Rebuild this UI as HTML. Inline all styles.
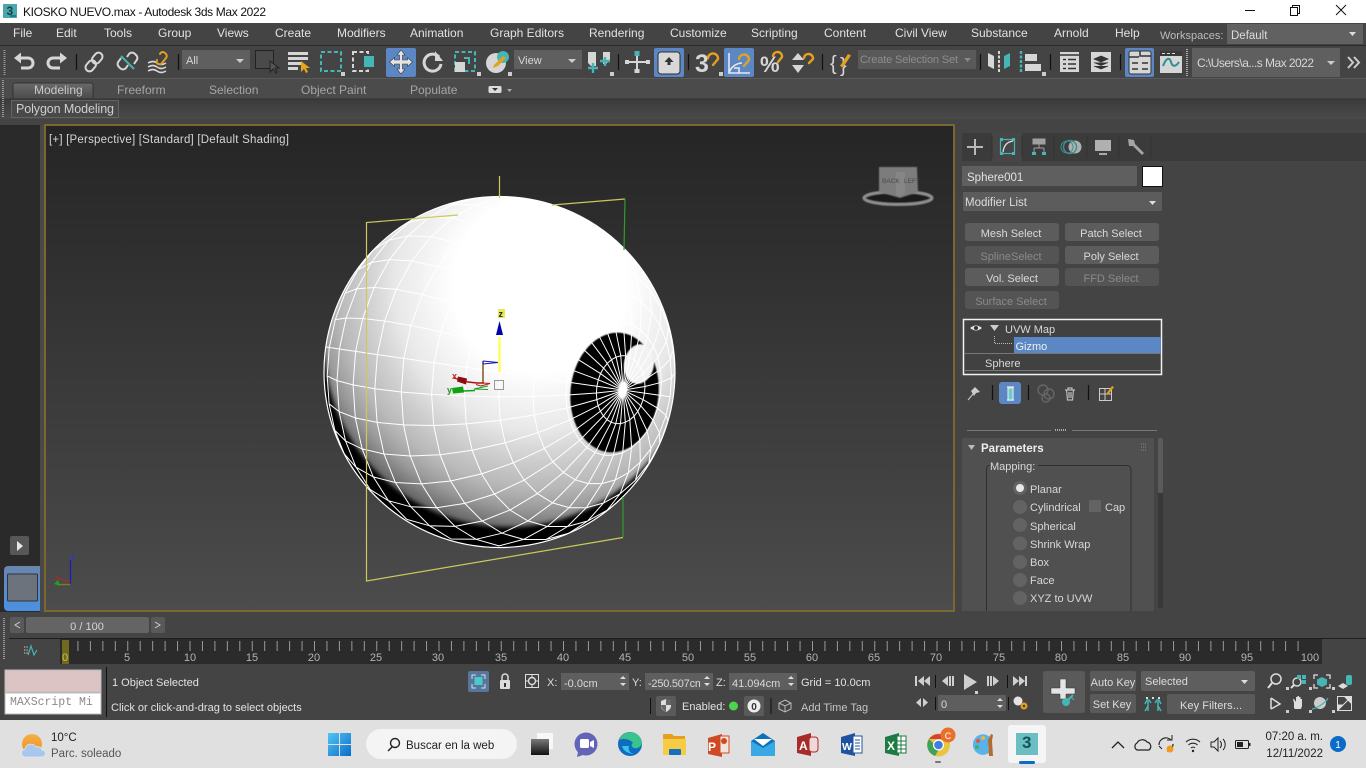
<!DOCTYPE html>
<html><head><meta charset="utf-8"><title>KIOSKO NUEVO.max - Autodesk 3ds Max 2022</title>
<style>
html,body{margin:0;padding:0;background:#444;width:1366px;height:768px;overflow:hidden}
svg{display:block;position:absolute;left:0;top:0}
text{font-family:"Liberation Sans",sans-serif;font-size:12px;fill:#dcdcdc}
.m{font-size:12px;fill:#e2e2e2}
.r{font-size:12px;fill:#a6a6a6}
.b{text-anchor:middle;font-size:11px;fill:#dadada}
.d{text-anchor:middle;font-size:11px;fill:#8a8a8a}
.p{font-size:11px;fill:#d8d8d8}
.t{text-anchor:middle;font-size:11px;fill:#b4b4b4}
.ic{fill:none;stroke:#d6d6d6;stroke-width:2}
.or{fill:none;stroke:#e3a11f;stroke-width:2.4;stroke-linecap:round}
.f{fill:#d6d6d6}
</style></head><body>
<svg xmlns="http://www.w3.org/2000/svg" width="1366" height="768" viewBox="0 0 1366 768">
<defs>
<linearGradient id="vp" x1="0" y1="0" x2="0" y2="1"><stop offset="0" stop-color="#252525"/><stop offset="1" stop-color="#4c4c4c"/></linearGradient>
<linearGradient id="tab" x1="0" y1="0" x2="0" y2="1"><stop offset="0" stop-color="#6a6a6a"/><stop offset="1" stop-color="#4a4a4a"/></linearGradient>
<linearGradient id="rb" x1="0" y1="0" x2="0" y2="1"><stop offset="0" stop-color="#3b3b3b"/><stop offset="1" stop-color="#4a4a4a"/></linearGradient>
<linearGradient id="vb" x1="0" y1="0" x2="0" y2="1"><stop offset="0" stop-color="#6a85ad"/><stop offset="1" stop-color="#4a90e2"/></linearGradient>
<radialGradient id="sp" gradientUnits="userSpaceOnUse" cx="540" cy="285" r="290">
<stop offset="0" stop-color="#fff"/><stop offset=".3" stop-color="#fff"/><stop offset=".5" stop-color="#e8e8e8"/><stop offset=".6" stop-color="#cfcfcf"/><stop offset=".7" stop-color="#b8b8b8"/><stop offset=".77" stop-color="#9c9c9c"/><stop offset=".82" stop-color="#7c7c7c"/><stop offset=".88" stop-color="#555"/></radialGradient>
<linearGradient id="win" x1="0" y1="0" x2="1" y2="1"><stop offset="0" stop-color="#52c6f5"/><stop offset="1" stop-color="#0a6cc8"/></linearGradient>
<linearGradient id="tv" x1="0" y1="0" x2="0" y2="1"><stop offset="0" stop-color="#7a7a7a"/><stop offset="1" stop-color="#111"/></linearGradient>
<linearGradient id="sun" x1="0" y1="0" x2="0" y2="1"><stop offset="0" stop-color="#f4b04a"/><stop offset="1" stop-color="#ee8f1e"/></linearGradient>
<clipPath id="sc"><circle cx="499.5" cy="372" r="175.5"/></clipPath>
<filter id="bl1" x="-10%" y="-10%" width="120%" height="120%"><feGaussianBlur stdDeviation="2"/></filter>
<filter id="bl2" x="-50%" y="-50%" width="200%" height="200%"><feGaussianBlur stdDeviation="3"/></filter>
<filter id="bl3" x="-20%" y="-20%" width="140%" height="140%"><feGaussianBlur stdDeviation=".6"/></filter>
</defs>

<!-- title bar -->
<rect width="1366" height="23" fill="#fff"/>
<rect x="3" y="4" width="14" height="14" fill="#4aa7ab"/><text x="6.5" y="15" style="font-size:12px;font-weight:bold;fill:#12414a">3</text><rect x="10" y="15" width="6" height="2" fill="#1d7f86"/>
<text x="23" y="16" style="font-size:12px;fill:#111" textLength="243">KIOSKO NUEVO.max - Autodesk 3ds Max 2022</text>
<path d="M1245 10.5h10" stroke="#111" stroke-width="1"/>
<path d="M1290.5 7.5h7v8h-7zM1292.5 7.5v-2h7v8h-2" fill="none" stroke="#111"/>
<path d="M1336 5l10 10M1346 5l-10 10" stroke="#111" stroke-width="1"/>

<!-- menu bar -->
<rect y="23" width="1366" height="22" fill="#444"/>
<rect y="45" width="1366" height="1" fill="#2a2a2a"/>
<g>
<text class="m" x="13" y="37">File</text><text class="m" x="56" y="37">Edit</text><text class="m" x="104" y="37">Tools</text><text class="m" x="158" y="37">Group</text><text class="m" x="217" y="37">Views</text><text class="m" x="275" y="37">Create</text><text class="m" x="337" y="37">Modifiers</text><text class="m" x="410" y="37">Animation</text><text class="m" x="490" y="37">Graph Editors</text><text class="m" x="589" y="37">Rendering</text><text class="m" x="670" y="37">Customize</text><text class="m" x="751" y="37">Scripting</text><text class="m" x="824" y="37">Content</text><text class="m" x="895" y="37">Civil View</text><text class="m" x="971" y="37">Substance</text><text class="m" x="1054" y="37">Arnold</text><text class="m" x="1115" y="37">Help</text>
</g>
<text x="1160" y="39" style="font-size:11px;fill:#bdbdbd">Workspaces:</text>
<rect x="1227" y="24" width="136" height="20" fill="#616161"/><text x="1231" y="39" style="font-size:11.5px;fill:#dcdcdc">Default</text><path d="M1349 32h7l-3.500 4z" fill="#ddd"/>

<!-- toolbar -->
<rect y="46" width="1366" height="32" fill="#444"/>
<rect y="78" width="1366" height="1" fill="#5a5a5a"/>
<path d="M4.500 50v26" stroke="#999" stroke-dasharray="1 1" stroke-width="2"/>
<!-- undo/redo -->
<g><path d="M18 58h10a5 5 0 0 1 5 5v0a5 5 0 0 1-5 5h-7" class="ic" style="stroke-width:3"/><path d="M14 58l7-5.500v11z" class="f"/></g>
<g transform="translate(81,0) scale(-1,1)"><path d="M18 58h10a5 5 0 0 1 5 5v0a5 5 0 0 1-5 5h-7" class="ic" style="stroke-width:3"/><path d="M14 58l7-5.500v11z" class="f"/></g>
<path d="M76.500 54v16M178.500 54v16" stroke="#111" stroke-width="1.200"/>
<!-- link -->
<g fill="none" stroke="#d6d6d6" stroke-width="2"><rect x="-4" y="-11" width="8" height="12" rx="4" transform="translate(94,62) rotate(40)"/><rect x="-4" y="-1" width="8" height="12" rx="4" transform="translate(94,62) rotate(40)"/></g>
<g fill="none" stroke="#d6d6d6" stroke-width="2"><path d="M121 58l-2 3a4 4 0 0 0 0 6l1 1a4 4 0 0 0 6 0l2-3M127 57l2-3a4 4 0 0 1 6 0l1 1a4 4 0 0 1 0 6l-2 3"/></g>
<path d="M121 56l13 13" stroke="#45b5b5" stroke-width="2"/>
<!-- bind -->
<path d="M148 63q5-3 9 0t9 0M148 67q5-3 9 0t9 0M148 71q5-3 9 0t9 0" class="ic" style="stroke-width:1.600"/>
<path d="M160 54a3 3 0 0 1 5 -1l1 1a3 3 0 0 1 0 4l-4 5a3 3 0 0 1-5 0a3 3 0 0 1 0-3" class="or" style="stroke-width:2"/>
<!-- All dropdown -->
<rect x="182" y="50" width="68" height="19" fill="#5f5f5f"/><text x="186" y="64" style="font-size:11px;fill:#d6d6d6">All</text><path d="M236 59h8l-4 4z" fill="#ccc"/>
<!-- select object -->
<rect x="255.500" y="50.500" width="18" height="18" fill="#4a4a4a" stroke="#222"/><path d="M270 61l0 11 3-3 3 4 1-1-2-4 4 0z" fill="#555" stroke="#222"/>
<!-- name select -->
<path d="M288 52h20v3h-20zM288 57h20v3h-20zM288 62h14v3h-14zM288 67h10v3h-10z" class="f"/><path d="M301 61l0 11 3-3 2 4 2-1-2-4 4 0z" fill="#e9a41e"/>
<!-- rect select -->
<rect x="321" y="52" width="20" height="19" fill="none" stroke="#45b5b5" stroke-width="2" stroke-dasharray="4 2.500"/><path d="M341 76v-4h4v4z" fill="#ccc"/>
<rect x="353" y="52" width="15" height="19" fill="none" stroke="#d6d6d6" stroke-width="2" stroke-dasharray="4 2.500"/><rect x="364" y="56" width="10" height="11" fill="#45b5b5"/>
<!-- move -->
<rect x="386" y="48" width="30" height="29" rx="2" fill="#5b88c4"/>
<path d="M401 50l4 5h-2.500v5h5v-2.500l5 4.500-5 4.500v-2.500h-5v5h2.500l-4 5-4-5h2.500v-5h-5v2.500l-5-4.500 5-4.500v2.500h5v-5h-2.500z" fill="#e4e4e4" stroke="#333" stroke-width=".6"/>
<!-- rotate -->
<path d="M439 57a8.500 8.500 0 1 0 2 7" class="ic" style="stroke-width:3"/><path d="M435 51v10h8z" class="f"/>
<!-- scale -->
<rect x="455" y="52" width="20" height="19" fill="none" stroke="#45b5b5" stroke-width="2" stroke-dasharray="4 2.500"/><path d="M464 58h5v6" fill="none" stroke="#45b5b5" stroke-width="2"/><rect x="455" y="62" width="10" height="10" class="f"/><path d="M477 76v-4h4v4z" fill="#ccc"/>
<!-- placement -->
<circle cx="496" cy="63" r="10" fill="#d6d6d6"/><circle cx="503" cy="57" r="6" fill="#45b5b5"/><path d="M494 65l9-9 3 2-8 8-5 2z" fill="#e3a11f"/><path d="M508 76v-4h4v4z" fill="#ccc"/>
<!-- View dropdown -->
<rect x="514" y="50" width="68" height="19" fill="#5f5f5f"/><text x="518" y="64" style="font-size:11px;fill:#d6d6d6">View</text><path d="M568 59h8l-4 4z" fill="#ccc"/>
<!-- pivot -->
<path d="M588 52h8v14h-5l-3-3zM600 52h10v8l-4 4h-3v-12z" class="f"/><path d="M593 63v10M588 68h10M605 57v9M600 61h10" stroke="#45b5b5" stroke-width="2.400"/><path d="M610 76v-4h4v4z" fill="#ccc"/>
<path d="M618.500 54v16M688.500 54v16M822.500 54v16M980.500 54v16M1050.500 54v16M1120.500 54v16" stroke="#111" stroke-width="1.200"/>
<!-- axis constraint -->
<path d="M637 54v18M626 62h22" stroke="#d6d6d6" stroke-width="2"/><rect x="634.500" y="51" width="5" height="5" fill="#45b5b5"/><rect x="634.500" y="69" width="5" height="4" class="f"/><rect x="646" y="60" width="4" height="4" class="f"/><rect x="625" y="60" width="4" height="4" class="f"/>
<!-- manipulate btn -->
<rect x="654" y="48" width="30" height="29" rx="2" fill="#5b88c4"/><rect x="658" y="52" width="22" height="22" rx="3" fill="#d8d8d8" stroke="#2d2d2d"/><path d="M669 57l4.500 5h-3v3h-3v-3h-3z" fill="#333"/>
<!-- 3 snap -->
<text x="695" y="72" style="font-size:25px;font-weight:bold;fill:#d6d6d6">3</text><path d="M708 58a5 5 0 1 1 10 1l-5 6" class="or"/><path d="M719 76v-4h4v4z" fill="#ccc"/>
<!-- angle snap -->
<rect x="724" y="48" width="30" height="29" rx="2" fill="#5b88c4"/><path d="M729 53v20h21M729 73a14 14 0 0 1 13 -10M734 68h5v5" fill="none" stroke="#e8e8e8" stroke-width="1.600"/><path d="M739 59a5 5 0 1 1 10 1l-5 6" class="or"/>
<!-- percent -->
<text x="760" y="72" style="font-size:22px;font-weight:bold;fill:#d6d6d6">%</text><path d="M773 56a4 4 0 1 1 9 1l-4 5" class="or"/>
<!-- spinner -->
<path d="M792 60l6-7 6 7zM792 65h12l-6 8z" class="f"/><path d="M804 58a4 4 0 1 1 9 1l-4 4" class="or"/>
<!-- {} -->
<text x="830" y="70" style="font-size:20px;fill:#d6d6d6">{</text><text x="840" y="72" style="font-size:20px;fill:#d6d6d6">}</text><path d="M840 66l8-12 3 1.500-8 12z" fill="#e3a11f"/>
<!-- create set -->
<rect x="858" y="50" width="118" height="19" fill="#595959"/><text x="860" y="63" style="font-size:11px;fill:#8d8d8d" textLength="98">Create Selection Set</text><path d="M964 58h7l-3.500 4z" fill="#888"/>
<!-- mirror -->
<path d="M988 53l6 3v13l-6-3z" class="f"/><path d="M999 51v22" stroke="#d6d6d6" stroke-width="2" stroke-dasharray="3 1.500"/><path d="M1010 53l-6 3v13l6-3z" fill="#45b5b5"/>
<!-- align -->
<path d="M1021 51v21" stroke="#45b5b5" stroke-width="2.400" stroke-dasharray="3 1.500"/><rect x="1025" y="54" width="12" height="7" class="f"/><rect x="1025" y="64" width="16" height="7" class="f"/><path d="M1042 76v-4h4v4z" fill="#ccc"/>
<!-- layers -->
<rect x="1060" y="52" width="19" height="20" fill="#d6d6d6"/><path d="M1060 55h19M1063 59.500h3M1068 59.500h8M1063 64h3M1068 64h8M1063 68.500h3M1068 68.500h8" stroke="#333" stroke-width="1.600"/>
<rect x="1091" y="52" width="20" height="20" fill="#d6d6d6"/><path d="M1101 56l7 3-7 3-7-3zM1094 62.500l7 3 7-3M1094 66l7 3 7-3" fill="#333" stroke="#333" stroke-width=".8"/>
<!-- graph btn -->
<rect x="1125" y="48" width="29" height="29" rx="2" fill="#5b88c4"/><rect x="1129" y="51" width="22" height="23" rx="2" fill="#d6d6d6" stroke="#333"/><path d="M1132 63h6M1142 63h6M1132 69h6M1142 69h6M1140 51v5h11M1129 57h10" stroke="#333" stroke-width="1.500" fill="none"/>
<rect x="1160" y="51" width="22" height="22" fill="#d6d6d6"/><rect x="1160" y="51" width="22" height="5" fill="#3a3a3a"/><path d="M1162 53.500h3M1167 53.500h3M1172 53.500h3" stroke="#ddd"/><path d="M1163 66c4-10 7-8 8-4s4 6 8 0" fill="none" stroke="#2a8f91" stroke-width="2"/>
<path d="M1187 49v27" stroke="#aaa" stroke-dasharray="1 1" stroke-width="2"/>
<rect x="1192" y="48" width="148" height="29" fill="#5f5f5f"/><text x="1197" y="67" style="font-size:12px;fill:#d6d6d6" textLength="117">C:\Users\a...s Max 2022</text><path d="M1327 61h8l-4 4z" fill="#ccc"/>
<path d="M1348 57l5 5.500-5 5.500M1354 57l5 5.500-5 5.500" fill="none" stroke="#ccc" stroke-width="2"/>

<!-- ribbon -->
<rect y="79" width="1366" height="20" fill="#4b4b4b"/>
<rect y="99" width="1366" height="20" fill="url(#rb)"/>
<rect y="98.500" width="1366" height="1" fill="#333"/>
<path d="M13 99v-14a2 2 0 0 1 2-2h76a2 2 0 0 1 2 2v14z" fill="url(#tab)" stroke="#333"/>
<text class="r" x="34" y="94" style="fill:#c8c8c8">Modeling</text><text class="r" x="117" y="94">Freeform</text><text class="r" x="209" y="94">Selection</text><text class="r" x="301" y="94">Object Paint</text><text class="r" x="410" y="94">Populate</text>
<rect x="488.500" y="86" width="13" height="7" rx="1.500" fill="#ddd"/><path d="M492 88h6l-3 3z" fill="#333"/><path d="M507 89h5l-2.500 3z" fill="#aaa"/>
<rect x="11.500" y="100.500" width="107" height="17" fill="#494949" stroke="#636363"/><text x="16" y="113" style="font-size:12.500px;fill:#cfcfcf" textLength="98">Polygon Modeling</text>
<path d="M3 80v38" stroke="#999" stroke-dasharray="1 1" stroke-width="2"/>
<rect y="119" width="1366" height="6" fill="#444"/>
<path d="M0 127.500h40M962 127.500h404" stroke="#8b8b8b" stroke-dasharray="1 1" stroke-width="2"/>

<!-- left strip -->
<rect y="125" width="40" height="487" fill="#2a2a2a"/>
<rect x="40" y="125" width="4" height="487" fill="#484848"/>
<rect x="10" y="536" width="19" height="19" rx="2" fill="#575757"/><path d="M17 541l6 5-6 5z" fill="#e8e8e8"/>
<path d="M4 570a4 4 0 0 1 4-4h32v45H8a4 4 0 0 1-4-4z" fill="url(#vb)"/><rect x="7.500" y="574" width="30" height="27" rx="1" fill="#6d737d" stroke="#30343b"/>

<!-- viewport -->
<rect x="45" y="125" width="909" height="486" fill="url(#vp)" stroke="#7a692e" stroke-width="2"/>
<text x="49" y="143" style="font-size:11.500px;fill:#d4d4d4" textLength="240">[+] [Perspective] [Standard] [Default Shading]</text>

<!-- viewcube -->
<ellipse cx="898" cy="198" rx="34" ry="6.500" fill="#1f1f1f" stroke="#8f8f8f" stroke-width="3" filter="url(#bl3)"/>
<path d="M879 167h38l1 25-18 6-21-6z" fill="#7c7c7c" filter="url(#bl3)"/><path d="M896 172h9v22l-5 3-4-2z" fill="#868686"/>
<text x="882" y="183" style="font-size:6.500px;fill:#4a4a4a">BACK</text><text x="904" y="183" style="font-size:6.500px;fill:#4a4a4a">LEFT</text>

<!-- sphere -->
<circle cx="499.500" cy="372" r="175.500" fill="#000"/>
<g clip-path="url(#sc)">
<circle cx="508" cy="343" r="184" fill="url(#sp)" filter="url(#bl1)"/>
<ellipse cx="614.500" cy="392.500" rx="44" ry="60" fill="#000" transform="rotate(6 614.500 392.500)" filter="url(#bl3)"/>
<ellipse cx="639" cy="364" rx="15" ry="20" fill="#f2f2f2" transform="rotate(10 639 364)" filter="url(#bl3)"/>
<ellipse cx="523" cy="332" rx="9" ry="8" fill="#fff" filter="url(#bl2)"/>
<g id="wire"></g>
</g>
<circle cx="499.500" cy="372" r="175.500" fill="none" stroke="#fff" stroke-width="1.200"/>

<!-- gizmo plane -->
<path d="M458 215L366.500 222.500V581L623 537.500M552 205L625 199" fill="none" stroke="#c9c95c" stroke-width="1.200"/>
<path d="M625 199L624 250M623 497V537" fill="none" stroke="#2c9d2c" stroke-width="1.200"/>
<path d="M499.500 176V198" stroke="#c9c95c" stroke-width="1.200"/>

<!-- transform gizmo -->
<path d="M499.500 337V372" stroke="#ffff55" stroke-width="2.400"/>
<path d="M499.500 321l3.500 14h-7z" fill="#0000b0"/>
<rect x="498" y="309" width="7" height="9" fill="#e8e85a"/><text x="498.500" y="317" style="font-size:9px;font-weight:bold;fill:#222">z</text>
<path d="M483 383V361" stroke="#7b4a10" stroke-width="1.400"/>
<path d="M483 361l15 1.500M483 364l15-1.500M483 361v3" stroke="#1515c0" fill="none"/>
<path d="M483 383l7 .5-9 2.500-5-1.500" stroke="#c01515" fill="none"/>
<path d="M488 386l-14 3 14 .5" stroke="#10a010" fill="none"/>
<path d="M454 378l14 4 9 1 7 0" stroke="#b01010" stroke-width="1.400" fill="none"/>
<path d="M458 376.500l9 2-1 6-9-3z" fill="#8e0c0c"/>
<path d="M452 388l11-1.500 1 6-11 1z" fill="#12a012"/><path d="M463 391l12-.5" stroke="#12a012" stroke-width="1.400"/>
<text x="452" y="379" style="font-size:9px;font-weight:bold;fill:#c02525">x</text>
<text x="447" y="393" style="font-size:9px;font-weight:bold;fill:#189a18">y</text>
<rect x="494.500" y="380.500" width="9" height="9" fill="none" stroke="#999"/>

<!-- mini axis -->
<path d="M70.500 560V585" stroke="#1a1ac0" stroke-width="1.200"/><text x="70" y="560" style="font-size:11px;fill:#3434c8">z</text>
<path d="M70.500 584.500H58" stroke="#7c7c20" stroke-width="1.400"/><path d="M70 582l-12-4" stroke="#a82a2a"/><path d="M54 584l4-4 2 6z" fill="#22a022"/><text x="55" y="580" style="font-size:8px;fill:#b02a2a">x</text>

<!-- command panel -->
<rect x="955" y="125" width="411" height="487" fill="#444"/>
<rect x="962" y="133" width="404" height="28" fill="#3b3b3b"/>
<rect x="992" y="133" width="30" height="28" fill="#464646"/>
<path d="M975 139v16M967 147h16" stroke="#b9b9b9" stroke-width="2"/>
<rect x="1000.500" y="139.500" width="14" height="14" fill="none" stroke="#45b5b5" stroke-width="1.200"/><path d="M1000 138h3v3h-3zM1012 138h3v3h-3zM1000 152h3v3h-3zM1012 152h3v3h-3z" fill="#45b5b5"/><path d="M1003 152c1-7 4-10 10-11" fill="none" stroke="#ddd" stroke-width="1.300"/>
<path d="M1033 139h12v5h-12zM1039 144v4M1034 148h10M1034 148v4M1044 148v4" fill="#a0a0a0" stroke="#a0a0a0"/><rect x="1032" y="152" width="4" height="3" fill="#45b5b5"/><rect x="1042" y="152" width="4" height="3" fill="#45b5b5"/>
<circle cx="1075" cy="147" r="6.500" fill="#b0b0b0"/><circle cx="1070" cy="147" r="6.500" fill="none" stroke="#3d8f8f" stroke-width="1.500"/><circle cx="1067" cy="147" r="6" fill="none" stroke="#3d8f8f"/>
<rect x="1095" y="140" width="16" height="11" fill="#b0b0b0"/><path d="M1099 154h8" stroke="#aaa" stroke-width="2"/>
<path d="M1128 139l6 1 1 4 9 9 -2 2-9-9-4 0z" fill="#a5a5a5"/>
<path d="M992 136v22M1022 136v22M1054 136v22M1087 136v22M1119 136v22M1151 136v22" stroke="#333"/>

<rect x="962" y="166" width="175" height="20" fill="#5f5f5f"/><text x="967" y="181" style="font-size:11.500px;fill:#e2e2e2">Sphere001</text>
<rect x="1142.500" y="166.500" width="20" height="20" fill="#fff" stroke="#111"/>
<rect x="963" y="192" width="199" height="19" fill="#5c5c5c"/><text x="965" y="206" style="font-size:11.500px;fill:#dcdcdc">Modifier List</text><path d="M1149 201h7l-3.500 4z" fill="#ddd"/>

<g fill="#5c5c5c"><rect x="965" y="223" width="94" height="18" rx="3"/><rect x="1065" y="223" width="94" height="18" rx="3"/><rect x="965" y="246" width="94" height="18" rx="3" fill="#545454"/><rect x="1065" y="246" width="94" height="18" rx="3"/><rect x="965" y="268" width="94" height="18" rx="3"/><rect x="1065" y="268" width="94" height="18" rx="3" fill="#545454"/><rect x="965" y="291" width="94" height="18" rx="3" fill="#545454"/></g>
<text class="b" x="1011" y="237">Mesh Select</text><text class="b" x="1111" y="237">Patch Select</text><text class="d" x="1011" y="260">SplineSelect</text><text class="b" x="1111" y="260">Poly Select</text><text class="b" x="1012" y="282">Vol. Select</text><text class="d" x="1111" y="282">FFD Select</text><text class="d" x="1011" y="305">Surface Select</text>

<rect x="963.500" y="319.500" width="198" height="55" fill="#414141" stroke="#f2f2f2" stroke-width="1.500"/>
<path d="M970 328q6-5 12 0q-6 5-12 0z" fill="#e0e0e0"/><circle cx="976" cy="328" r="2" fill="#333"/>
<path d="M990 325h9l-4.500 6z" fill="#ccc"/>
<text class="p" x="1005" y="333">UVW Map</text>
<path d="M994.500 336v7.500h18" stroke="#bbb" stroke-dasharray="1 1" fill="none"/>
<rect x="1014" y="337" width="147" height="16" fill="#5b88c4"/><text class="p" x="1015.500" y="350" style="fill:#eee">Gizmo</text>
<path d="M964 353.500h197M964 370.500h197" stroke="#777"/>
<text class="p" x="985" y="367">Sphere</text>

<path d="M968 400l5-6" stroke="#ccc"/><path d="M971 391l4-4 5 5-4 1-2 3z" fill="#ccc"/>
<path d="M992.500 385v15M1028.500 385v15M1088.500 385v15" stroke="#111" stroke-width="1.200"/>
<rect x="999" y="382" width="22" height="22" rx="3" fill="#5b88c4"/><path d="M1007 387h7M1007 400h7M1010.500 387v13" stroke="#d8d8d8" stroke-width="1.500"/><rect x="1008" y="388" width="5" height="12" fill="#6ccaca" stroke="#eee"/>
<circle cx="1043" cy="390" r="5" fill="none" stroke="#666" stroke-width="1.400"/><circle cx="1049" cy="394" r="5" fill="none" stroke="#666" stroke-width="1.400"/><circle cx="1046" cy="398" r="4" fill="none" stroke="#666" stroke-width="1.400"/>
<path d="M1065 390h10M1068 390v-2h4v2M1066.500 390l1 10h5l1-10M1069 392v6M1071 392v6" fill="none" stroke="#bbb" stroke-width="1.200"/>
<rect x="1099.500" y="388.500" width="12" height="12" fill="none" stroke="#ccc"/><path d="M1099 394h12M1105 388v12" stroke="#ccc"/><path d="M1106 394l6-8 2 1-6 8z" fill="#e3a11f"/>

<path d="M967 430.500h84M1072 430.500h85" stroke="#777"/><path d="M1055 430h12" stroke="#aaa" stroke-dasharray="1 1" stroke-width="2"/>
<rect x="962" y="438" width="192" height="173" fill="#505050"/>
<rect x="1158" y="438" width="5" height="170" rx="2" fill="#383838"/><rect x="1158" y="438" width="5" height="55" rx="2" fill="#5b5b5b"/>
<path d="M968 445h7l-3.500 5z" fill="#bbb"/>
<text x="981" y="452" style="font-size:11.500px;font-weight:bold;fill:#eee">Parameters</text>
<path d="M1141 444h5M1141 447h5M1141 450h5" stroke="#888" stroke-dasharray="1 1"/>
<path d="M986.500 611V470a4 4 0 0 1 3-5M1038 465.500h89a4 4 0 0 1 4 4V611" fill="none" stroke="#2f2f2f"/>
<text x="990" y="470" style="font-size:11px;fill:#d8d8d8">Mapping:</text>
<g fill="#636363"><circle cx="1020" cy="488" r="7"/><circle cx="1020" cy="507" r="7"/><circle cx="1020" cy="525" r="7"/><circle cx="1020" cy="543.500" r="7"/><circle cx="1020" cy="562" r="7"/><circle cx="1020" cy="580" r="7"/><circle cx="1020" cy="598" r="7"/></g>
<circle cx="1020" cy="488" r="4" fill="#e8e8e8"/>
<g><text class="p" x="1030" y="493">Planar</text><text class="p" x="1030" y="511">Cylindrical</text><text class="p" x="1030" y="530">Spherical</text><text class="p" x="1030" y="548">Shrink Wrap</text><text class="p" x="1030" y="566">Box</text><text class="p" x="1030" y="584">Face</text><text class="p" x="1030" y="602">XYZ to UVW</text><text class="p" x="1105" y="511">Cap</text></g>
<rect x="1089" y="500" width="12" height="12" fill="#636363"/>

<!-- bottom area -->
<rect y="612" width="1366" height="108" fill="#444"/>
<path d="M4 618v42" stroke="#999" stroke-dasharray="1 1" stroke-width="2"/>
<rect x="10" y="617" width="14" height="16" rx="2" fill="#595959"/><rect x="26" y="617" width="123" height="16" rx="2" fill="#646464"/><rect x="151" y="617" width="14" height="16" rx="2" fill="#595959"/>
<path d="M20 622l-5 3 5 3M155 622l5 3-5 3" fill="none" stroke="#ccc"/>
<text x="87" y="630" style="font-size:11px;fill:#d4d4d4;text-anchor:middle">0 / 100</text>
<rect x="9" y="638" width="1357" height="1" fill="#1e1e1e"/>
<rect x="60" y="639" width="1262" height="25" fill="#2b2b2b"/>
<path d="M24 647h4M24 650h4M24 653h4" stroke="#ccc" stroke-dasharray="1 .6"/><path d="M28 655l3-9 3 9 3-5" fill="none" stroke="#45b5b5" stroke-width="1.200"/>
<path d="M65 646H1310" stroke="#999" stroke-width="10" stroke-dasharray="1 11.450"/>
<rect x="62" y="640" width="7" height="24" fill="#6f6a20"/>
<g><text class="t" x="65" y="661" style="fill:#c8c840">0</text><text class="t" x="127" y="661">5</text><text class="t" x="190" y="661">10</text><text class="t" x="252" y="661">15</text><text class="t" x="314" y="661">20</text><text class="t" x="376" y="661">25</text><text class="t" x="438" y="661">30</text><text class="t" x="501" y="661">35</text><text class="t" x="563" y="661">40</text><text class="t" x="625" y="661">45</text><text class="t" x="688" y="661">50</text><text class="t" x="750" y="661">55</text><text class="t" x="812" y="661">60</text><text class="t" x="874" y="661">65</text><text class="t" x="936" y="661">70</text><text class="t" x="999" y="661">75</text><text class="t" x="1061" y="661">80</text><text class="t" x="1123" y="661">85</text><text class="t" x="1185" y="661">90</text><text class="t" x="1247" y="661">95</text><text class="t" x="1310" y="661">100</text></g>
<rect y="664" width="1366" height="56" fill="#444"/>

<rect x="5" y="670" width="96" height="22" fill="#dcc3c4" stroke="#bbb"/>
<rect x="5" y="693" width="96" height="21" fill="#fff" stroke="#bbb"/>
<text x="10" y="705" style="font-family:'Liberation Mono',monospace;font-size:11.500px;fill:#8a8a8a">MAXScript Mi</text><rect x="97" y="694" width="3" height="19" fill="#fff"/>
<path d="M106.500 667v50" stroke="#111"/>
<text x="112" y="686" style="font-size:11px;fill:#e2e2e2">1 Object Selected</text>
<text x="111" y="711" style="font-size:11px;fill:#e2e2e2">Click or click-and-drag to select objects</text>

<rect x="468" y="671" width="21" height="21" rx="2" fill="#56769d"/><path d="M472 679v-4h4M481 675h4v4M485 684v4h-4M476 688h-4v-4" fill="none" stroke="#ddd"/><rect x="474.500" y="677" width="8" height="8" fill="#4ccaca"/>
<rect x="500" y="680" width="10" height="9" rx="1" fill="#ddd"/><path d="M502 680v-3a3 3 0 0 1 6 0v3" fill="none" stroke="#ddd" stroke-width="1.500"/><rect x="504" y="683" width="2" height="4" fill="#333"/>
<rect x="525.500" y="674.500" width="13" height="13" fill="none" stroke="#ddd"/><circle cx="532" cy="681" r="3.500" fill="none" stroke="#ddd" stroke-width="1.400"/><path d="M532 675v3M532 684v3M526 681h3M535 681h3" stroke="#ddd"/>
<text x="547" y="686" style="font-size:11px;fill:#ddd">X:</text><text x="632" y="686" style="font-size:11px;fill:#ddd">Y:</text><text x="716" y="686" style="font-size:11px;fill:#ddd">Z:</text>
<g fill="#5e5e5e"><rect x="561" y="673" width="68" height="17"/><rect x="645" y="673" width="68" height="17"/><rect x="729" y="673" width="68" height="17"/></g>
<text x="564" y="687" style="font-size:11px;fill:#d8d8d8">-0.0cm</text><text x="648" y="687" style="font-size:11px;fill:#d8d8d8" textLength="56">-250.507cm</text><rect x="700" y="673" width="13" height="17" fill="#5e5e5e"/><text x="732" y="687" style="font-size:11px;fill:#d8d8d8">41.094cm</text>
<path d="M620 679l3-3 3 3zM620 683l3 3 3-3zM704 679l3-3 3 3zM704 683l3 3 3-3zM788 679l3-3 3 3zM788 683l3 3 3-3z" fill="#ddd"/>
<text x="801" y="686" style="font-size:11px;fill:#e2e2e2">Grid = 10.0cm</text>
<path d="M650.500 698v16M771 698v16" stroke="#111"/>
<rect x="656" y="696" width="20" height="20" rx="2" fill="#5a5a5a"/><path d="M661 701l5-2 5 2v5c0 3-3 5-5 6c-2-1-5-3-5-6z" fill="#ddd"/><path d="M666 699v6h5v-4zM666 705h-5c0 3 3 6 5 7z" fill="#666"/>
<text x="682" y="710" style="font-size:11px;fill:#e2e2e2">Enabled:</text>
<circle cx="733.500" cy="706" r="4.500" fill="#4cd44c"/>
<rect x="744" y="696" width="20" height="20" rx="2" fill="#5a5a5a"/><circle cx="754" cy="706" r="6.500" fill="#eee"/><text x="754" y="710" style="font-size:10px;font-weight:bold;fill:#333;text-anchor:middle">0</text>
<path d="M785 700l6 3v6l-6 3-6-3v-6zM779 703l6 3 6-3M785 706v6" fill="none" stroke="#bbb"/>
<text x="801" y="711" style="font-size:11px;fill:#c4c4c4">Add Time Tag</text>

<!-- playback -->
<g fill="#cfcfcf">
<rect x="915" y="676" width="2" height="10"/><path d="M924 676v10l-6-5zM930 676v10l-6-5z"/>
<rect x="935" y="675" width="1" height="13" fill="#111"/>
<path d="M948 676v10l-6-5z"/><rect x="949" y="676" width="2" height="10"/><rect x="952" y="676" width="2" height="10"/>
<path d="M964 674l13 8-13 8z"/><path d="M975 694v-3h3v3z"/>
<rect x="987" y="676" width="2" height="10"/><rect x="990" y="676" width="2" height="10"/><path d="M993 676v10l6-5z"/>
<rect x="1007" y="675" width="1" height="13" fill="#111"/>
<path d="M1013 676v10l6-5zM1019 676v10l6-5z"/><rect x="1025" y="676" width="2" height="10"/>
<path d="M921 698v9l-5-4.500zM923 698v9l5-4.500z"/>
<rect x="935" y="697" width="1" height="13" fill="#111"/>
</g>
<rect x="938" y="695" width="68" height="16" fill="#5e5e5e"/><text x="941" y="708" style="font-size:11px;fill:#d8d8d8">0</text><path d="M997 701l3-3 3 3zM997 705l3 3 3-3z" fill="#ddd"/>
<rect x="1008" y="697" width="1" height="13" fill="#111"/>
<circle cx="1018" cy="701" r="4.500" fill="#e4e4e4"/><circle cx="1024" cy="706" r="3.500" fill="#e3a11f"/><circle cx="1024" cy="706" r="1.300" fill="#444"/>

<rect x="1043" y="671" width="42" height="42" rx="3" fill="#5a5a5a"/><path d="M1060 679h6v9h9v6h-9v5h-6v-5h-9v-6h9z" fill="#e4e4e4" stroke="#333" stroke-width=".5"/><path d="M1064 704l9-9" stroke="#45b5b5" stroke-width="2"/><circle cx="1066" cy="702" r="4" fill="#45b5b5"/><path d="M1071 697l3 3" stroke="#45b5b5"/>
<rect x="1090" y="671" width="46" height="20" rx="2" fill="#5a5a5a"/><rect x="1090" y="694" width="46" height="19" rx="2" fill="#5a5a5a"/>
<text x="1113" y="686" style="font-size:11px;fill:#dcdcdc;text-anchor:middle">Auto Key</text><text x="1112" y="708" style="font-size:11px;fill:#dcdcdc;text-anchor:middle">Set Key</text>
<rect x="1141" y="671" width="114" height="20" rx="2" fill="#5e5e5e"/><text x="1145" y="685" style="font-size:11px;fill:#dcdcdc">Selected</text><path d="M1241 680h7l-3.500 4z" fill="#ddd"/>
<path d="M1145 704l2-4 2 0 2 3M1155 703l2-3 2 0 2 4M1148 701v10M1158 701v10M1148 706l-3 5M1158 706l3 5" fill="none" stroke="#45b5b5" stroke-width="1.500"/><path d="M1146 698h14" stroke="#ddd" stroke-dasharray="2 4" stroke-width="2"/>
<rect x="1167" y="694" width="88" height="20" rx="2" fill="#5a5a5a"/><text x="1211" y="709" style="font-size:11px;fill:#dcdcdc;text-anchor:middle" textLength="62">Key Filters...</text>

<!-- nav -->
<circle cx="1276" cy="679" r="5" fill="none" stroke="#ddd" stroke-width="1.500"/><path d="M1272 683l-4 5" stroke="#ddd" stroke-width="2"/>
<circle cx="1297" cy="682" r="4" fill="none" stroke="#ddd" stroke-width="1.400"/><path d="M1294 685l-3 3" stroke="#ddd" stroke-width="2"/><path d="M1297 675h4v4h-4zM1302 675h4v4h-4zM1302 680h4v4h-4z" fill="#45b5b5"/>
<path d="M1314 679v-4h4M1326 675h4v4M1330 684v4h-4M1318 688h-4v-4" fill="none" stroke="#ddd" stroke-width="1.300"/><path d="M1322 677l5 2.500v5l-5 2.500-5-2.500v-5z" fill="#45b5b5"/>
<path d="M1338 686l5-3 5 3-5 3z" fill="#ddd"/><rect x="1346" y="675" width="6" height="10" rx="2" fill="#45b5b5"/>
<path d="M1271 698l9 6-9 5M1271 698v11" fill="none" stroke="#ddd" stroke-width="1.500"/>
<path d="M1294 708v-5l-1-4 1 0 2 3v-5h1.500v4v-5h1.500v5v-4h1.500v5v-3h1.500v7l-1 3h-6z" fill="#ddd"/>
<circle cx="1320" cy="703" r="6" fill="#ccc"/><path d="M1312 709c3 0 14-6 16-11" fill="none" stroke="#45b5b5" stroke-width="1.200"/>
<rect x="1337.500" y="696.500" width="14" height="14" fill="none" stroke="#ddd"/><path d="M1338 710l5-5h-5zM1351 697h-6l6 6z M1342 706l6-6" fill="#ddd" stroke="#ddd"/>
<path d="M1286 690v-3h3v3zM1309 690v-3h3v3zM1332 690v-3h3v3zM1286 713v-3h3v3zM1309 713v-3h3v3zM1332 713v-3h3v3z" fill="#ccc"/>

<!-- taskbar -->
<rect y="720" width="1366" height="48" fill="#e0e0e0"/>
<circle cx="32" cy="744" r="10" fill="url(#sun)"/><path d="M26 757a4 4 0 0 1-1-8a6 6 0 0 1 11-2a4.500 4.500 0 0 1 6 3a3.500 3.500 0 0 1 0 7z" fill="#a9c7ea" stroke="#dfe9f6" stroke-width=".8"/>
<text x="51" y="741" style="font-size:11.500px;fill:#222">10°C</text><text x="51" y="757" style="font-size:11.500px;fill:#555">Parc. soleado</text>
<path d="M328 733h11v11h-11zM340 733h11v11h-11zM328 745h11v11h-11zM340 745h11v11h-11z" fill="url(#win)"/>
<rect x="366" y="729" width="151" height="30" rx="15" fill="#f4f4f4"/>
<circle cx="395" cy="743" r="4.500" fill="none" stroke="#222" stroke-width="1.400"/><path d="M392 747l-4 4" stroke="#222" stroke-width="1.400"/>
<text x="406" y="749" style="font-size:11.500px;fill:#222">Buscar en la web</text>
<rect x="537" y="733" width="16" height="16" fill="#f8f8f8"/><rect x="531" y="739" width="18" height="16" fill="url(#tv)"/>
<circle cx="586" cy="744" r="11.500" fill="#6264b8"/><path d="M578 752l-1 5 6-2z" fill="#6264b8"/><rect x="580" y="739" width="9" height="9" rx="1.500" fill="#fff"/><path d="M590 742l4-2v8l-4-2z" fill="#fff"/>
<circle cx="630" cy="744" r="12" fill="#0f6bc0"/><path d="M619 740a12 12 0 0 1 23 2c0 5-5 7-8 6s-3-4-1-5c-3-4-10-5-14-3z" fill="#39c48b"/><path d="M622 746c1 5 7 8 12 8c-5-1-6-5-5-8z" fill="#38c2e8"/>
<path d="M663 735a1 1 0 0 1 1-1h8l2 2h11v5h-22z" fill="#e3a11f"/><path d="M663 739h23v16h-23z" fill="#f7cc44"/><rect x="669" y="749" width="12" height="6" rx="1" fill="#1270bc"/>
<path d="M708 738l14-4v23l-14-3z" fill="#cf4a23"/><rect x="720" y="736" width="9" height="17" fill="#f4e4dc" stroke="#cf4a23"/><circle cx="724" cy="741" r="3" fill="#cf4a23"/><text x="708" y="751" style="font-size:12px;font-weight:bold;fill:#fff">P</text>
<path d="M751 741l12-8 12 8v15h-24z" fill="#0d72bd"/><path d="M751 741l12 7 12-7v15h-24z" fill="#39a9e6"/><path d="M754 739h18l-9 7z" fill="#fff"/>
<path d="M797 737l14-4v23l-14-3z" fill="#a82b2b"/><rect x="809" y="737" width="9" height="15" rx="3" fill="#efd7d7" stroke="#a82b2b"/><text x="799" y="750" style="font-size:12px;font-weight:bold;fill:#fff">A</text>
<path d="M841 737l14-4v23l-14-3z" fill="#20539f"/><rect x="853" y="736" width="9" height="17" fill="#fff" stroke="#20539f"/><path d="M855 740h5M855 743h5M855 746h5M855 749h5" stroke="#20539f"/><text x="842" y="750" style="font-size:10.500px;font-weight:bold;fill:#fff">W</text>
<path d="M885 737l14-4v23l-14-3z" fill="#1c7a43"/><rect x="897" y="736" width="9" height="17" fill="#fff" stroke="#1c7a43"/><path d="M897 741h9M897 745h9M897 749h9M901 736v17" stroke="#1c7a43"/><text x="887" y="750" style="font-size:12px;font-weight:bold;fill:#fff">X</text>
<circle cx="938.500" cy="745" r="11.500" fill="#e8c53a"/><path d="M929 739a11.500 11.500 0 0 1 19 0h-9.500z" fill="#d6423a"/><path d="M929 739a11.500 11.500 0 0 0 6 17l4-7z" fill="#3ea358"/><circle cx="938.500" cy="745" r="5.500" fill="#fff"/><circle cx="938.500" cy="745" r="4.300" fill="#3f7fe0"/>
<circle cx="948" cy="735" r="7.500" fill="#e8702a"/><text x="948" y="739" style="font-size:9px;fill:#fff;text-anchor:middle">C</text>
<rect x="935" y="761" width="6" height="2" rx="1" fill="#777"/>
<path d="M973 745a10 10 0 0 1 19-5l-1 4c-4 0-3 6-1 8a10 10 0 0 1-17-7z" fill="#5ab2ea"/><circle cx="978" cy="741" r="2" fill="#e4553f"/><circle cx="983" cy="738" r="2" fill="#e9b83d"/><circle cx="977" cy="747" r="2" fill="#3fb36d"/>
<path d="M988 740l3-6 2 1-1 6 1 15h-4z" fill="#b46c2c"/>
<rect x="1008" y="725" width="38" height="38" rx="3" fill="#f5f5f5"/>
<rect x="1016" y="733" width="22" height="22" fill="#6bbec2"/><text x="1022" y="748" style="font-size:17px;font-weight:bold;fill:#12545e">3</text>
<rect x="1019" y="761" width="16" height="3" rx="1.500" fill="#0a6cc8"/>
<path d="M1112 748l6-6 6 6" fill="none" stroke="#222" stroke-width="1.300"/>
<path d="M1137 750a4 4 0 0 1 0-7a6 6 0 0 1 10-1a4.500 4.500 0 0 1 2 8z" fill="none" stroke="#222" stroke-width="1.200"/>
<path d="M1159 745a7 7 0 0 1 12-5M1173 744a7 7 0 0 1-6 7" fill="none" stroke="#222" stroke-width="1.200"/><path d="M1172 735v5h-5M1159 746l3 3" fill="none" stroke="#222"/><circle cx="1170" cy="749" r="3.500" fill="#f09a1f"/>
<path d="M1186 742a10 10 0 0 1 14 0M1188.500 745a6.500 6.500 0 0 1 9 0M1191 748a3 3 0 0 1 4 0" fill="none" stroke="#222" stroke-width="1.100"/><circle cx="1193" cy="751" r="1.200" fill="#222"/>
<path d="M1211 742h3l4-4v13l-4-4h-3z" fill="none" stroke="#222"/><path d="M1220 741a5 5 0 0 1 0 7M1223 739a8 8 0 0 1 0 11" fill="none" stroke="#222"/>
<rect x="1235.500" y="740.500" width="13" height="8" rx="1" fill="none" stroke="#222"/><rect x="1237" y="742" width="6" height="5" fill="#222"/><rect x="1249" y="743" width="1.500" height="3" fill="#222"/>
<text x="1323" y="740" style="font-size:11.500px;fill:#222;text-anchor:end">07:20 a. m.</text><text x="1323" y="757" style="font-size:11.500px;fill:#222;text-anchor:end">12/11/2022</text>
<circle cx="1338" cy="744" r="8" fill="#0a6cc8"/><text x="1338" y="748" style="font-size:10px;fill:#fff;text-anchor:middle">1</text>
</svg>
<script>
(function(){
var R=175.5,cx=499.5,cy=372,p=[.704,.103,.703],l=Math.hypot(p[2],p[0]);
var u=[-p[2]/l,0,p[0]/l];
var v=[p[1]*u[2]-p[2]*u[1],p[2]*u[0]-p[0]*u[2],p[0]*u[1]-p[1]*u[0]];
var d="",ph=.1,N=32,S=Math.PI/16;
function pt(t,f){var c=Math.cos(t),s=Math.sin(t),a=Math.cos(f+ph),b=Math.sin(f+ph),o=[];
for(var i=0;i<3;i++)o[i]=c*p[i]+s*(a*u[i]+b*v[i]);return o;}
function add(list){var on=false;for(var i=0;i<list.length;i++){var q=list[i];
if(q[2]>0.0){d+=(on?"L":"M")+(cx+R*q[0]).toFixed(1)+" "+(cy+R*q[1]).toFixed(1);on=true;}else on=false;}}
var i,j,a;
for(i=1;i<16;i++){a=[];for(j=0;j<=N;j++)a.push(pt(i*S,j*2*Math.PI/N));add(a);}
for(j=0;j<N;j++){a=[];for(i=0;i<=16;i++)a.push(pt(i*S,j*2*Math.PI/N));add(a);}
var e=document.createElementNS("http://www.w3.org/2000/svg","path");
e.setAttribute("d",d);e.setAttribute("fill","none");e.setAttribute("stroke","#fff");e.setAttribute("stroke-width","1");
document.getElementById("wire").appendChild(e);
})();
</script>
</body></html>
